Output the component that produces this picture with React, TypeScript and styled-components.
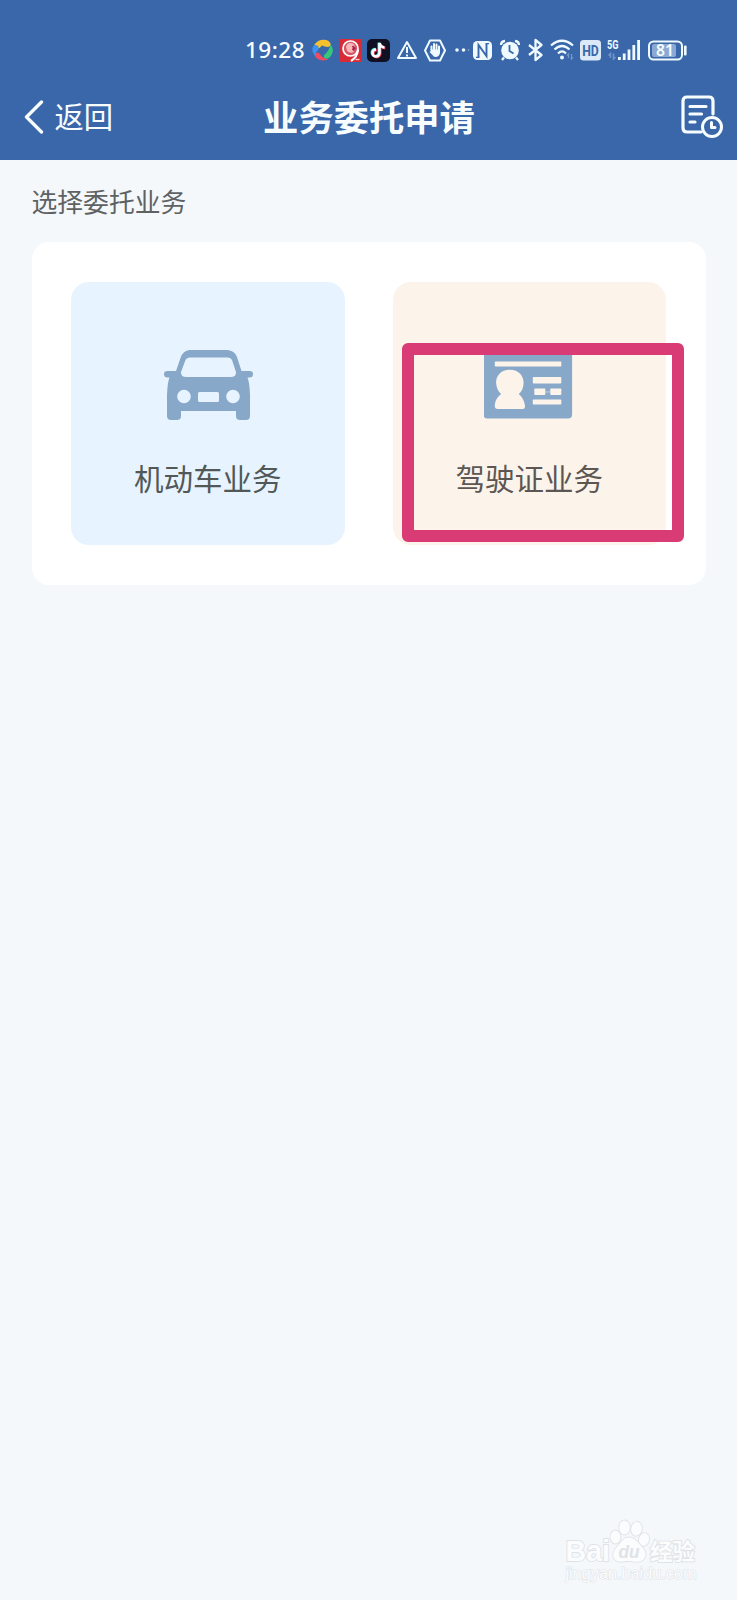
import React from "react";
import styled, { createGlobalStyle } from "styled-components";

const Global = createGlobalStyle`
  * { box-sizing: border-box; }
  body {
    margin: 0;
    background: #f4f8fb;
    font-family: "Noto Sans", "Noto Sans CJK SC", sans-serif;
  }
`;

const Page = styled.div`
  position: relative;
  width: 737px;
  height: 1600px;
  overflow: hidden;
  background: #f4f8fb;
`;

const Header = styled.header`
  height: 160px;
  padding-top: 35px;
  background: #3967a9;
  color: #f7fdff;
`;

const StatusBar = styled.div`
  display: flex;
  align-items: center;
  height: 30px;
  padding-left: 245px;
`;

const Clock = styled.span`
  width: 62px;
  font-family: "Noto Sans", sans-serif;
  font-size: 22.5px;
  font-weight: 500;
  letter-spacing: 0.5px;
  line-height: 30px;
  white-space: nowrap;
`;

const StatusIcon = styled.svg<{ $gap: number }>`
  flex: none;
  display: block;
  height: 30px;
  margin-left: ${(p) => p.$gap}px;
  overflow: visible;
`;

const NavBar = styled.div`
  display: grid;
  grid-template-columns: 1fr auto 1fr;
  align-items: center;
  height: 86px;
  margin-top: 9px;
  padding: 0 13.5px 1px 23.5px;
`;

const BackButton = styled.button`
  display: flex;
  align-items: center;
  gap: 11px;
  padding: 0;
  border: 0;
  background: none;
  color: inherit;
  font: 400 29.3px/40px "Noto Sans CJK SC", sans-serif;
`;

const BackLabel = styled.span`
  margin-top: -3px;
`;

const Title = styled.h1`
  margin: -1px 9px 0 0;
  font: 700 35.3px/48px "Noto Sans CJK SC", sans-serif;
`;

const HistoryButton = styled.button`
  justify-self: end;
  display: flex;
  padding: 0;
  border: 0;
  background: none;
`;

const SectionTitle = styled.h2`
  margin: 0;
  padding: 22px 0 0 31.5px;
  height: 82px;
  color: #5f6263;
  font: 400 25.8px/38px "Noto Sans CJK SC", sans-serif;
`;

const Panel = styled.section`
  position: relative;
  display: flex;
  gap: 48px;
  width: 674px;
  height: 343px;
  margin-left: 32px;
  padding: 39.5px 39px;
  border-radius: 17px;
  background: #fff;
`;

const Tile = styled.div<{ $bg: string }>`
  display: flex;
  flex-direction: column;
  align-items: center;
  width: 273.5px;
  height: 263.5px;
  padding-top: 68.5px;
  border-radius: 18px;
  background: ${(p) => p.$bg};
`;

const TileLabel = styled.span<{ $color: string }>`
  margin-top: 34px;
  color: ${(p) => p.$color};
  font: 400 29.5px/44px "Noto Sans CJK SC", sans-serif;
`;

const Highlight = styled.div`
  position: absolute;
  left: 370px;
  top: 101px;
  width: 282px;
  height: 199px;
  border: 12px solid #d93b74;
  border-radius: 6px;
`;

const Watermark = styled.svg`
  position: absolute;
  left: 550px;
  top: 1505px;
`;

function StatusIcons() {
  return (
    <>
      <StatusIcon $gap={5} width="21" viewBox="0 0 21 30">
        <path d="M2.500 9.500Q6 4.500 12 4.800Q17 5 18.500 8.500Q19 11.500 16 12Q12.500 11.500 10 10.500Q8.500 13 5 13.500Q2 13 2.500 9.500Z" fill="#f6c12d" />
        <path d="M18.500 9.500Q22.500 14.500 19.500 20Q17 24.500 13 23.500Q11 22 12.500 19.500Q17 16 18.500 9.500Z" fill="#37c77b" />
        <path d="M16 24.500Q10 27 5 23.500Q2 21 3 18.500Q5 16.500 7.500 18.500Q10 23 16 24.500Z" fill="#f04b63" />
        <path d="M3.500 21.500Q-.5 17.500 .5 12.500Q2 9 5.500 10.500Q7.500 12 6 15.500Q3 17 3.500 21.500Z" fill="#3d92f2" />
      </StatusIcon>
      <StatusIcon $gap={6} width="23" viewBox="0 0 23 30">
        <rect y="4" width="23" height="23" rx="1" fill="#d82b35" />
        <circle cx="11.500" cy="13.500" r="7.500" fill="#d75565" stroke="#fff" strokeWidth="1.700" />
        <path d="M7 12Q8 7.500 12 8Q16 8.500 15.500 12L13 13.500L15 17Q11 19 8 16Z" fill="#f6b9b5" />
        <path d="M13.500 11L15.500 13.500L13.500 15" fill="none" stroke="#a71b50" strokeWidth="1.700" />
        <path d="M19 14.500Q18.500 22 12 26" fill="none" stroke="#fff" strokeWidth="2.200" />
        <path d="M16.500 24.500H20.500" stroke="#f8cdc7" strokeWidth="1.300" />
      </StatusIcon>
      <StatusIcon $gap={5} width="23" viewBox="0 0 23 30">
        <rect y="4" width="23" height="23" rx="5" fill="#111022" />
        <path d="M12.500 8V18A3.500 3.500 0 1 1 9 14.500M12.500 8Q13.500 12 17.500 12.500" transform="translate(-.7 -.5)" fill="none" stroke="#36e3df" strokeWidth="2.600" />
        <path d="M12.500 8V18A3.500 3.500 0 1 1 9 14.500M12.500 8Q13.500 12 17.500 12.500" transform="translate(.8 .6)" fill="none" stroke="#ed3458" strokeWidth="2.600" />
        <path d="M12.500 8V18A3.500 3.500 0 1 1 9 14.500M12.500 8Q13.500 12 17.500 12.500" fill="none" stroke="#fff" strokeWidth="2.600" />
      </StatusIcon>
      <StatusIcon $gap={7} width="20" viewBox="0 0 20 30" fill="none" stroke="#effaff" strokeWidth="2">
        <path d="M10 7L19 23H1Z" strokeLinejoin="round" />
        <path d="M10 12V18M10 19.500V21.500" />
      </StatusIcon>
      <StatusIcon $gap={7} width="22" viewBox="0 0 22 30">
        <path d="M6 5.500H16L21 15.500L16 25.500H6L1 15.500Z" fill="none" stroke="#effaff" strokeWidth="2" strokeLinejoin="round" />
        <path d="M7.500 17V11.500M10 16V9M12.500 16V9.500M15 17V11.500" stroke="#effaff" strokeWidth="2" strokeLinecap="round" />
        <path d="M6.600 14.500H16V18Q15 22 11.500 22Q9.500 22 8.500 20L5.500 17Q6 16 7.500 17Z" fill="#effaff" />
      </StatusIcon>
      <StatusIcon $gap={9} width="14" viewBox="0 0 14 30" fill="#effaff">
        <circle cx="2" cy="15" r="1.800" />
        <circle cx="8.500" cy="15" r="1.800" />
        <circle cx="13.500" cy="15" r=".8" opacity=".5" />
      </StatusIcon>
      <StatusIcon $gap={4} width="19" viewBox="0 0 19 30">
        <rect y="6" width="19" height="19" rx="4.500" fill="#effaff" />
        <path d="M5.500 22V10L13.500 21V9" fill="none" stroke="#3967a9" strokeWidth="1.900" />
        <path d="M3 22.300H6.500M12.500 8.700H16" stroke="#3967a9" strokeWidth="1.200" />
      </StatusIcon>
      <StatusIcon $gap={8} width="20" viewBox="0 0 20 30">
        <circle cx="10" cy="15.500" r="8.800" fill="#effaff" />
        <path d="M1 10Q1 6.500 5 6M15 6Q19 6.500 19 10M4 22.500L2 25M16 22.500L18 25" fill="none" stroke="#effaff" strokeWidth="2.300" />
        <path d="M9.500 10V16L13.500 18.500" fill="none" stroke="#3967a9" strokeWidth="1.800" />
      </StatusIcon>
      <StatusIcon $gap={8} width="15" viewBox="0 0 15 30">
        <path d="M1 10L13.500 20L7.500 25V5L13.500 10L1 20" fill="none" stroke="#effaff" strokeWidth="2.300" strokeLinejoin="round" />
      </StatusIcon>
      <StatusIcon $gap={7} width="24" viewBox="0 0 24 30" fill="none" stroke="#effaff" strokeWidth="2.200">
        <path d="M1 10.500Q12 1 23 10.500M4.500 14.500Q12 7.500 19.500 14.500M8 18.500Q12 14.500 16 18.500" />
        <circle cx="12" cy="22.500" r="2" fill="#effaff" stroke="none" />
        <path d="M18.500 23V19L17 20.500M21.500 19V24L23 22.500" stroke="#7396cc" strokeWidth="1.300" />
      </StatusIcon>
      <StatusIcon $gap={6} width="21" viewBox="0 0 21 30">
        <rect y="5" width="21" height="20.500" rx="3.500" fill="#dce9f8" />
        <text x="2.200" y="20.500" textLength="16.600" lengthAdjust="spacingAndGlyphs" fontFamily="Roboto" fontSize="14.500" fontWeight="700" fill="#3967a9">HD</text>
      </StatusIcon>
      <StatusIcon $gap={6} width="33" viewBox="0 0 33 30" fill="#effaff">
        <text x="0" y="13.500" textLength="11.500" lengthAdjust="spacingAndGlyphs" fontFamily="Roboto" fontSize="12" fontWeight="700">5G</text>
        <path d="M3.500 23V18.500L1.500 20.500M6.500 18.500V24L8.500 22" fill="none" stroke="#7396cc" strokeWidth="1.500" />
        <path d="M11 22h2.800v3H11zM15.800 18.500h2.800V25h-2.800zM20.600 14.500h2.800V25h-2.800zM25.400 10h2.800v15h-2.800zM30.200 5H33v20h-2.800z" />
      </StatusIcon>
      <StatusIcon $gap={8} width="39" viewBox="0 0 39 30">
        <rect x="1" y="6.500" width="33" height="18" rx="4.500" fill="none" stroke="#effaff" strokeWidth="2" />
        <rect x="4" y="9" width="24" height="13" rx="2" fill="#8ca9d3" />
        <rect x="36" y="10.500" width="2.600" height="10" rx="1" fill="#effaff" />
        <text x="8" y="21.300" textLength="18" lengthAdjust="spacingAndGlyphs" fontFamily="Noto Sans" fontSize="16.500" fontWeight="600" fill="#f6fdff">81</text>
      </StatusIcon>
    </>
  );
}

const CarIcon = () => (
  <svg width="90" height="71" viewBox="-.5 0 90 71" fill="#88a8c9">
    <path
      fillRule="evenodd"
      d="M26 0H64Q71 .5 73.500 7L78 21H86Q89.500 21 89.500 24Q89.500 27.500 86 27.500H84Q86 32 86.500 45V66Q86.500 70 82.500 70H76.500Q72.500 70 72.500 66V61H17.500V66Q17.500 70 13.500 70H7.500Q3.500 70 3.500 66V45Q4 32 6 27.500H4Q.5 27.500 .5 24Q.5 21 4 21H12.500L17 8Q19.500 .5 26 0ZM26 7.500Q23 7.500 22 10L17.500 22Q17 27 23 27H67Q73 27 72.500 22L68.500 10Q67.500 7.500 64.500 7.500ZM20.500 39.700A6.800 6.800 0 1 0 20.500 53.300A6.800 6.800 0 1 0 20.500 39.700ZM69.500 39.700A6.800 6.800 0 1 0 69.500 53.300A6.800 6.800 0 1 0 69.500 39.700ZM36 42Q34.500 42 34.500 43.500V50.500Q34.500 52 36 52H54Q55.500 52 55.500 50.500V43.500Q55.500 42 54 42Z"
    />
  </svg>
);

const LicenseIcon = () => (
  <svg width="90" height="71" viewBox="1.200 0 90 71">
    <rect x=".8" y="0" width="88.500" height="68.500" rx="4" fill="#88a8c9" />
    <g fill="#fcf3eb">
      <rect x="12" y="11.500" width="66.500" height="5" rx=".8" />
      <path d="M27 19.700C17.500 19.700 13 26.500 13.300 33C13.700 38 15.500 41.500 18.300 44C14.500 47 12 51 12 56Q12 59 15 59H39Q42.500 59 42.200 56C41.700 51 39.500 47 36 44C39 41.500 40.600 38 40.800 33C41 26.500 36.500 19.700 27 19.700Z" />
      <rect x="50" y="27" width="28.500" height="6.500" rx=".8" />
      <rect x="51.500" y="38.500" width="11" height="6.500" rx=".8" />
      <rect x="62.500" y="41" width="5" height="1.800" opacity=".3" />
      <rect x="67.500" y="38.500" width="11" height="6.500" rx=".8" />
      <rect x="50" y="49.500" width="28.500" height="5" rx=".8" />
    </g>
  </svg>
);

export default function App() {
  return (
    <>
      <Global />
      <Page>
        <Header>
          <StatusBar>
            <Clock>19:28</Clock>
            <StatusIcons />
          </StatusBar>
          <NavBar>
            <BackButton>
              <svg width="20" height="34" viewBox="0 0 20 34" fill="none" stroke="#f7fdff" strokeWidth="3.300" strokeLinecap="round" strokeLinejoin="round">
                <path d="M17.500 2L2.500 17L17.500 32" />
              </svg>
              <BackLabel>返回</BackLabel>
            </BackButton>
            <Title>业务委托申请</Title>
            <HistoryButton aria-label="记录">
              <svg width="43" height="43" viewBox="0 0 43 43" fill="none" stroke="#f7fdff" strokeWidth="3.200" strokeLinecap="round" strokeLinejoin="round">
                <path d="M32 19V6Q32 2 28 2H6Q2 2 2 6V33Q2 37 6 37H20" />
                <path d="M9 11.500H25M9 19H20.500M9 27H14" />
                <circle cx="31" cy="32" r="9.500" strokeWidth="3" />
                <path d="M30.500 27.500V32.500H34" strokeWidth="3" />
              </svg>
            </HistoryButton>
          </NavBar>
        </Header>
        <SectionTitle>选择委托业务</SectionTitle>
        <Panel>
          <Tile $bg="#e7f4ff">
            <CarIcon />
            <TileLabel $color="#525857">机动车业务</TileLabel>
          </Tile>
          <Tile $bg="#fcf3eb">
            <LicenseIcon />
            <TileLabel $color="#5d5753">驾驶证业务</TileLabel>
          </Tile>
          <Highlight />
        </Panel>
        <Watermark width="170" height="90" viewBox="0 0 170 90" fill="#fafcfe" stroke="#e0e3e6" strokeWidth="1.800" paintOrder="stroke">
          <text x="15.500" y="56" textLength="44.500" lengthAdjust="spacingAndGlyphs" fontFamily="Liberation Sans" fontWeight="700" fontSize="29">Bai</text>
          <ellipse cx="65.500" cy="32" rx="5" ry="6.500" />
          <ellipse cx="74.500" cy="22.500" rx="5.300" ry="7" />
          <ellipse cx="86.500" cy="23.800" rx="5.300" ry="7" transform="rotate(10 86.500 23.800)" />
          <ellipse cx="94" cy="34.500" rx="5" ry="6.500" transform="rotate(15 94 34.500)" />
          <path d="M79 32.500C84 32.500 88 37 91 41C95 45 97 49 94.500 53C91 59 84 56 79 56C73 56 66 59 63.500 52C62 47 66 43 69 39.500C72 36 74 32.500 79 32.500Z" />
          <text x="68.500" y="53" textLength="21" lengthAdjust="spacingAndGlyphs" fontFamily="Liberation Sans" fontStyle="italic" fontWeight="700" fontSize="19" fill="#e0e3e6" stroke="none">du</text>
          <text x="100" y="54.500" textLength="45" fontFamily="Noto Sans CJK SC" fontWeight="700" fontSize="22.500">经验</text>
          <text x="15.500" y="73.500" textLength="131" lengthAdjust="spacingAndGlyphs" fontFamily="Liberation Sans" fontSize="16" strokeWidth="1.100">jingyan.baidu.com</text>
        </Watermark>
      </Page>
    </>
  );
}
